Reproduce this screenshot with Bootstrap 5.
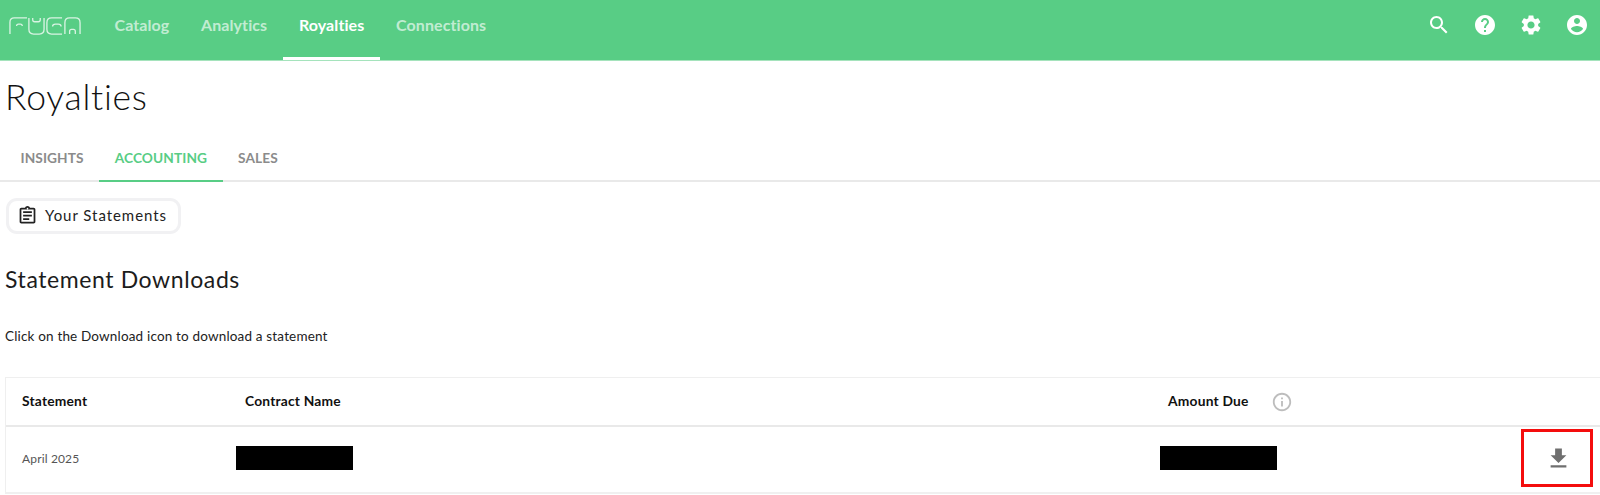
<!DOCTYPE html>
<html lang="en">
<head>
<meta charset="utf-8">
<title>Royalties</title>
<link href="https://cdn.jsdelivr.net/npm/bootstrap@5.3.0/dist/css/bootstrap.min.css" rel="stylesheet">
<style>
body { font-family: "Lato", "Noto Sans", sans-serif; background: #fff; color: #1c1c1c; overflow: hidden; }
.topbar { background: #58cd85; height: 61px; padding: 0; border-bottom: 1px solid #a5e3bc; }
.brand-mark { width: 74px; height: 18px; margin-left: 8px; margin-right: 16.6px; margin-top: 17px; }
.topbar .nav-link { font-size: 16px; font-weight: 700; color: rgba(255,255,255,.65); padding: 0 15.9px; height: 60px; line-height: 49px; letter-spacing: .08px; }
.topbar .nav-link.active { color: #fff; border-bottom: 3px solid #fff; }
.top-icon { width: 24px; height: 24px; fill: #fff; }
.top-icons { gap: 22px; margin-right: 11px; margin-top: -10px; }
.page-title { font-size: 35.5px; font-weight: 300; margin: 0; padding: 15px 0 0 5px; line-height: 42px; color: #111; letter-spacing: .75px; }
.sub-tabs { margin-top: 19px; padding-left: 5px; border-bottom: 2px solid #e9e9e9; height: 45px; }
.sub-tabs .nav-link { font-size: 13.7px; font-weight: 700; color: #8b8b8b; padding: 0 15.5px; height: 45px; line-height: 41px; letter-spacing: .1px; }
.sub-tabs .nav-link.active { color: #58cd85; border-bottom: 2px solid #58cd85; }
.statement-pill { margin: 16px 0 0 6px; width: 175px; height: 36px; border: 3px solid #f1f1f3; border-radius: 11px; gap: 7px; padding-left: 8px; padding-bottom: 1px; font-size: 15px; letter-spacing: .95px; color: #222; }
.statement-pill svg { width: 21px; height: 21px; fill: #222; }
.section-title { font-size: 23px; font-weight: 400; margin: 30px 0 0 5px; line-height: 30px; color: #1c1c1c; letter-spacing: .6px; }
.hint-text { font-size: 13.5px; margin: 32px 0 0 5px; line-height: 20px; color: #222; letter-spacing: .17px; }
.data-box { margin: 31px 0 0 5px; border: 1px solid #efefef; border-right: 0; border-bottom: 2px solid #f0f0f0; padding-bottom: 3px; }
.head-row { height: 49px; border-bottom: 2px solid #e9e9e9; font-size: 13.8px; font-weight: 700; color: #111; letter-spacing: .2px; }
.body-row { height: 62px; font-size: 12px; color: #555; letter-spacing: .15px; }
.col-statement { width: 224px; padding-left: 16px; flex: none; }
.body-row .col-statement { padding-top: 2px; }
.col-contract { width: 924px; flex: none; }
.head-row .col-contract { padding-left: 15px; }
.body-row .col-contract { padding-left: 6px; }
.col-amount { flex: 1; }
.head-row .col-amount { padding-left: 14px; gap: 22px; }
.body-row .col-amount { padding-left: 6px; }
.redacted { display: block; width: 117px; height: 24px; background: #000; }
.info-mark { width: 22px; height: 22px; fill: #bdbdbd; }
.download-zone { width: 72px; height: 58px; border: 3px solid #f40d0d; margin-right: 7px; flex: none; padding-left: 3px; }
.download-zone svg { width: 27px; height: 27px; fill: #6f6f6f; }
</style>
</head>
<body>
<nav class="navbar topbar d-flex align-items-stretch justify-content-between flex-nowrap">
  <div class="d-flex align-items-start">
    <svg class="brand-mark" viewBox="0 0 76 19" fill="none" stroke="#d9f3e3" stroke-width="1.4" aria-label="FUGA logo">
      <path d="M1 18V5.500Q1 1 5.500 1H19"/><path d="M8 9.500Q8 7.500 10 7.500H12Q14 7.500 14 9.500"/>
      <path d="M21 1V13Q21 18 26 18H32Q37 18 37 13V1"/><path d="M25 1V3Q25 5 27 5H31Q33 5 33 3V1"/>
      <path d="M56 18H45Q40 18 40 13V6Q40 1 45 1H56"/><path d="M46 10Q46 7.500 49 7.500H52Q55 7.500 55 10"/>
      <path d="M59 18V6Q59 1 64 1H70Q75 1 75 6V18"/><path d="M64 18V15Q64 13 66 13H68Q70 13 70 15V18"/>
    </svg>
    <ul class="nav flex-nowrap">
      <li class="nav-item"><a class="nav-link" href="#">Catalog</a></li>
      <li class="nav-item"><a class="nav-link" href="#">Analytics</a></li>
      <li class="nav-item"><a class="nav-link active" href="#">Royalties</a></li>
      <li class="nav-item"><a class="nav-link" href="#">Connections</a></li>
    </ul>
  </div>
  <div class="d-flex align-items-center top-icons">
    <svg class="top-icon" viewBox="0 0 24 24"><path d="M15.5 14h-.79l-.28-.27C15.41 12.59 16 11.11 16 9.5 16 5.910 13.090 3 9.5 3S3 5.910 3 9.5 5.910 16 9.5 16c1.610 0 3.090-.59 4.230-1.570l.27.28v.79l5 4.990L20.490 19l-4.990-5zm-6 0C7.010 14 5 11.990 5 9.5S7.010 5 9.5 5 14 7.010 14 9.5 11.990 14 9.500 14z"/></svg>
    <svg class="top-icon" viewBox="0 0 24 24"><path d="M12 2C6.480 2 2 6.480 2 12s4.480 10 10 10 10-4.480 10-10S17.520 2 12 2zm1 17h-2v-2h2v2zm2.070-7.750l-.9.920C13.450 12.900 13 13.500 13 15h-2v-.5c0-1.100.45-2.100 1.170-2.830l1.240-1.260c.37-.36.59-.86.59-1.410 0-1.100-.9-2-2-2s-2 .9-2 2H8c0-2.210 1.790-4 4-4s4 1.790 4 4c0 .88-.36 1.680-.93 2.250z"/></svg>
    <svg class="top-icon" viewBox="0 0 24 24"><path d="M19.14,12.94c0.04-0.3,0.06-0.61,0.06-0.94c0-0.32-0.02-0.64-0.07-0.94l2.03-1.58c0.18-0.14,0.23-0.41,0.12-0.61l-1.92-3.32c-0.12-0.22-0.37-0.29-0.59-0.22l-2.39,0.96c-0.5-0.38-1.03-0.7-1.62-0.94L14.4,2.81c-0.04-0.24-0.24-0.41-0.48-0.41h-3.84c-0.24,0-0.43,0.17-0.47,0.41L9.25,5.35C8.66,5.59,8.12,5.92,7.63,6.29L5.24,5.33c-0.22-0.08-0.47,0-0.59,0.22L2.74,8.87C2.62,9.08,2.66,9.34,2.86,9.48l2.03,1.58C4.84,11.36,4.8,11.69,4.8,12s0.02,0.64,0.07,0.94l-2.03,1.58c-0.18,0.14-0.23,0.41-0.12,0.61l1.92,3.32c0.12,0.22,0.37,0.29,0.59,0.22l2.39-0.96c0.5,0.38,1.03,0.7,1.62,0.94l0.36,2.54c0.05,0.24,0.24,0.41,0.48,0.41h3.84c0.24,0,0.44-0.17,0.47-0.41l0.36-2.54c0.59-0.24,1.13-0.56,1.62-0.94l2.39,0.96c0.22,0.08,0.47,0,0.59-0.22l1.92-3.32c0.12-0.22,0.07-0.47-0.12-0.61L19.14,12.94z M12,15.6c-1.98,0-3.6-1.62-3.6-3.6s1.62-3.6,3.6-3.6s3.6,1.62,3.6,3.6S13.98,15.6,12,15.6z"/></svg>
    <svg class="top-icon" viewBox="0 0 24 24"><path d="M12 2C6.480 2 2 6.480 2 12s4.480 10 10 10 10-4.480 10-10S17.520 2 12 2zm0 3c1.660 0 3 1.340 3 3s-1.340 3-3 3-3-1.340-3-3 1.340-3 3-3zm0 14.200c-2.500 0-4.710-1.280-6-3.220.03-1.990 4-3.080 6-3.080 1.990 0 5.970 1.090 6 3.080-1.290 1.940-3.500 3.220-6 3.220z"/></svg>
  </div>
</nav>
<main>
  <h1 class="page-title">Royalties</h1>
  <ul class="nav sub-tabs">
    <li class="nav-item"><a class="nav-link" href="#">INSIGHTS</a></li>
    <li class="nav-item"><a class="nav-link active" href="#">ACCOUNTING</a></li>
    <li class="nav-item"><a class="nav-link" href="#">SALES</a></li>
  </ul>
  <div class="statement-pill d-flex align-items-center">
    <svg viewBox="0 0 24 24"><path d="M19 3h-4.180C14.400 1.840 13.300 1 12 1s-2.400.84-2.820 2H5c-1.100 0-2 .9-2 2v14c0 1.100.9 2 2 2h14c1.100 0 2-.9 2-2V5c0-1.100-.9-2-2-2zm-7 0c.55 0 1 .45 1 1s-.45 1-1 1-1-.45-1-1 .45-1 1-1zm7 16H5V5h14v14zM7 7h10v2H7zm0 4h10v2H7zm0 4h7v2H7z"/></svg>
    <span>Your Statements</span>
  </div>
  <h2 class="section-title">Statement Downloads</h2>
  <p class="hint-text">Click on the Download icon to download a statement</p>
  <div class="data-box">
    <div class="head-row d-flex align-items-center">
      <div class="col-statement">Statement</div>
      <div class="col-contract">Contract Name</div>
      <div class="col-amount d-flex align-items-center">
        <span>Amount Due</span>
        <svg class="info-mark" viewBox="0 0 24 24"><path d="M11 7h2v2h-2zm0 4h2v6h-2zm1-9C6.480 2 2 6.480 2 12s4.480 10 10 10 10-4.480 10-10S17.520 2 12 2zm0 18c-4.410 0-8-3.590-8-8s3.590-8 8-8 8 3.590 8 8-3.590 8-8 8z"/></svg>
      </div>
    </div>
    <div class="body-row d-flex align-items-center">
      <div class="col-statement">April 2025</div>
      <div class="col-contract"><span class="redacted"></span></div>
      <div class="col-amount"><span class="redacted"></span></div>
      <div class="download-zone d-flex align-items-center justify-content-center">
        <svg viewBox="0 0 24 24"><path d="M19 9h-4V3H9v6H5l7 7 7-7zM5 18v2h14v-2H5z"/></svg>
      </div>
    </div>
  </div>
</main>
<script src="https://cdn.jsdelivr.net/npm/bootstrap@5.3.0/dist/js/bootstrap.bundle.min.js"></script>
</body>
</html>
